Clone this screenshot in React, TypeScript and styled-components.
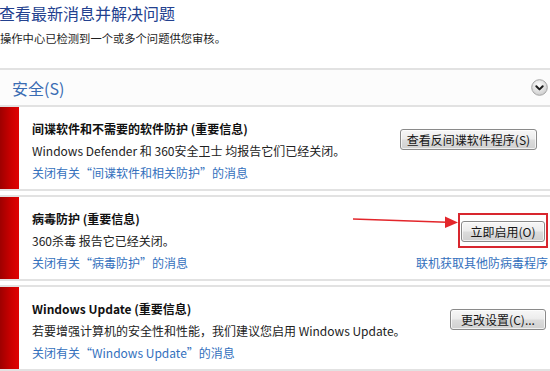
import React from 'react';
import styled, { createGlobalStyle } from 'styled-components';

const GlobalStyle = createGlobalStyle`
  html, body {
    margin: 0;
    padding: 0;
    background: #fff;
  }
  body {
    font-family: "Noto Sans CJK SC", "Noto Sans", sans-serif;
    color: #1b1b1b;
  }
`;

const Page = styled.div`
  width: 550px;
  height: 371px;
  overflow: hidden;
  background: #fff;
`;

const Heading = styled.h1`
  margin: 2px 0 0 -1px;
  font-size: 16px;
  font-weight: normal;
  line-height: 22px;
  color: #23418f;
`;

const Intro = styled.p`
  margin: 7px 0 0 0;
  font-size: 11.3px;
  line-height: 14px;
  color: #1e1e1e;
`;

const SectionBar = styled.div`
  margin-top: 23px;
  height: 35px;
  border-top: 2px solid #e2e2e2;
  background: #fcfcfc;
  display: flex;
  align-items: center;
  justify-content: space-between;
  padding: 0 2px 0 12px;
`;

const SectionTitle = styled.span`
  font-size: 16px;
  color: #3a6cb3;
  line-height: 20px;
`;

const List = styled.div`
  display: flex;
  flex-direction: column;
  gap: 4px;
`;

const Card = styled.div`
  position: relative;
  display: flex;
  height: 82px;
  border-top: 2px solid #e2e2e2;
  border-bottom: 2px solid #e2e2e2;
`;

const Strip = styled.div`
  width: 19px;
  flex: none;
  background: linear-gradient(90deg, #9e0000 0%, #cc0000 60%, #e00303 100%);
`;

const CardBody = styled.div`
  flex: 1;
  display: grid;
  grid-template-columns: 1fr auto;
  grid-template-rows: 22px 22px 22px;
  padding: 11px 2px 5px 13px;
  font-size: 12px;
  line-height: 22px;
`;

const CardTitle = styled.div`
  grid-column: 1;
  font-weight: bold;
  color: #111;
`;

const CardText = styled.div`
  grid-column: 1;
  color: #222;
`;

const Link = styled.a`
  color: #3370bd;
  text-decoration: none;
  cursor: pointer;
`;

const Action = styled.div<{ $inset: number }>`
  grid-column: 2;
  grid-row: 1 / 3;
  align-self: center;
  justify-self: end;
  margin-right: ${p => p.$inset}px;
`;

const ExtraLink = styled(Link)`
  grid-column: 2;
  grid-row: 3;
  justify-self: end;
`;

const Button = styled.button<{ $w: number }>`
  width: ${p => p.$w}px;
  height: 21px;
  padding: 0;
  border: 1px solid #8a8a8a;
  border-radius: 3px;
  background: linear-gradient(#f7f7f7 0%, #ececec 48%, #dcdcdc 52%, #d0d0d0 100%);
  font-family: inherit;
  font-size: 12px;
  line-height: 19px;
  color: #151515;
  box-shadow: inset 0 0 0 1px rgba(255, 255, 255, 0.7);
`;

const Highlight = styled.div`
  border: 2px solid #d8262e;
  padding: 6px 1px 3px 1px;
`;

const Pointer = styled.svg`
  position: absolute;
  left: 350px;
  top: 13px;
  overflow: visible;
`;

const Chevron = () => (
  <svg width="17" height="17" viewBox="0 0 17 17">
    <defs>
      <radialGradient id="chev" cx="45%" cy="35%" r="65%">
        <stop offset="0%" stopColor="#ffffff" />
        <stop offset="100%" stopColor="#cdcdcd" />
      </radialGradient>
    </defs>
    <circle cx="8.5" cy="8.5" r="7.8" fill="url(#chev)" stroke="#a5a5a5" strokeWidth="1" />
    <path d="M5.3 7.2 L8.5 10.4 L11.7 7.2" fill="none" stroke="#1c1c1c" strokeWidth="2" strokeLinecap="round" strokeLinejoin="round" />
  </svg>
);

export default function App() {
  return (
    <Page>
      <GlobalStyle />
      <Heading>查看最新消息并解决问题</Heading>
      <Intro>操作中心已检测到一个或多个问题供您审核。</Intro>

      <SectionBar>
        <SectionTitle>安全(S)</SectionTitle>
        <Chevron />
      </SectionBar>

      <List>
        <Card>
          <Strip />
          <CardBody>
            <CardTitle>间谍软件和不需要的软件防护 (重要信息)</CardTitle>
            <CardText>Windows Defender 和 360安全卫士 均报告它们已经关闭。</CardText>
            <CardText><Link>关闭有关“间谍软件和相关防护”的消息</Link></CardText>
            <Action $inset={11}>
              <Button $w={137}>查看反间谍软件程序(S)</Button>
            </Action>
          </CardBody>
        </Card>

        <Card>
          <Strip />
          <CardBody>
            <CardTitle>病毒防护 (重要信息)</CardTitle>
            <CardText>360杀毒 报告它已经关闭。</CardText>
            <CardText><Link>关闭有关“病毒防护”的消息</Link></CardText>
            <Action $inset={0}>
              <Highlight>
                <Button $w={84}>立即启用(O)</Button>
              </Highlight>
            </Action>
            <ExtraLink>联机获取其他防病毒程序</ExtraLink>
          </CardBody>
          <Pointer width="110" height="20" viewBox="0 0 110 20">
            <line x1="3" y1="9" x2="97" y2="12.3" stroke="#e3262b" strokeWidth="1.6" />
            <polygon points="95,6.5 108,12.6 95,18" fill="#e3262b" />
          </Pointer>
        </Card>

        <Card>
          <Strip />
          <CardBody>
            <CardTitle>Windows Update (重要信息)</CardTitle>
            <CardText>若要增强计算机的安全性和性能，我们建议您启用 Windows Update。</CardText>
            <CardText><Link>关闭有关“Windows Update”的消息</Link></CardText>
            <Action $inset={2}>
              <Button $w={96}>更改设置(C)...</Button>
            </Action>
          </CardBody>
        </Card>
      </List>
    </Page>
  );
}
